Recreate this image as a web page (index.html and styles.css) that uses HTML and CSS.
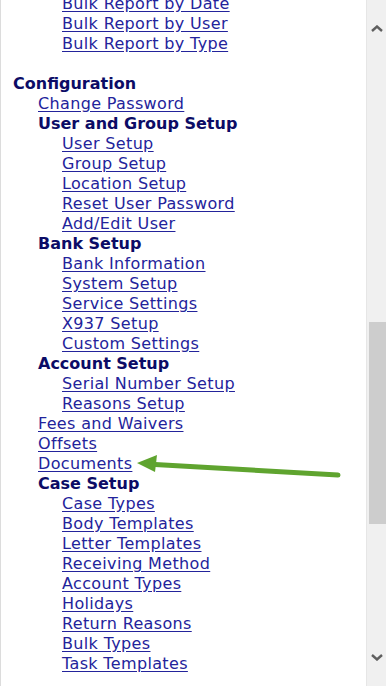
FILE: index.html
```html
<!DOCTYPE html>
<html lang="en">
  <head>
    <meta charset="UTF-8" />
    <meta name="viewport" content="width=device-width, initial-scale=1.0" />
    <title>Configuration Menu</title>
    <link rel="stylesheet" href="styles.css">
  </head>

  <body>
    <div class="frame">
      <div class="menu">
        <ul class="menu-list">
          <li class="lvl2"><a href="#">Bulk Report by Date</a></li>
          <li class="lvl2"><a href="#">Bulk Report by User</a></li>
          <li class="lvl2"><a href="#">Bulk Report by Type</a></li>
          <li class="spacer"></li>
          <li class="lvl0 head">Configuration</li>
          <li class="lvl1"><a href="#">Change Password</a></li>
          <li class="lvl1 head">User and Group Setup</li>
          <li class="lvl2"><a href="#">User Setup</a></li>
          <li class="lvl2"><a href="#">Group Setup</a></li>
          <li class="lvl2"><a href="#">Location Setup</a></li>
          <li class="lvl2"><a href="#">Reset User Password</a></li>
          <li class="lvl2"><a href="#">Add/Edit User</a></li>
          <li class="lvl1 head">Bank Setup</li>
          <li class="lvl2"><a href="#">Bank Information</a></li>
          <li class="lvl2"><a href="#">System Setup</a></li>
          <li class="lvl2"><a href="#">Service Settings</a></li>
          <li class="lvl2"><a href="#">X937 Setup</a></li>
          <li class="lvl2"><a href="#">Custom Settings</a></li>
          <li class="lvl1 head">Account Setup</li>
          <li class="lvl2"><a href="#">Serial Number Setup</a></li>
          <li class="lvl2"><a href="#">Reasons Setup</a></li>
          <li class="lvl1"><a href="#">Fees and Waivers</a></li>
          <li class="lvl1"><a href="#">Offsets</a></li>
          <li class="lvl1 marked">
            <a href="#">Documents</a>
            <!-- green annotation arrow -->
            <svg class="arrow" width="210" height="24" viewBox="0 0 210 24">
              <path d="M18 7.5 L201 18" stroke="#5fa42f" stroke-width="5" stroke-linecap="round" fill="none" />
              <path d="M0 6 L20 -2 L18 15 Z" fill="#5fa42f" />
            </svg>
          </li>
          <li class="lvl1 head">Case Setup</li>
          <li class="lvl2"><a href="#">Case Types</a></li>
          <li class="lvl2"><a href="#">Body Templates</a></li>
          <li class="lvl2"><a href="#">Letter Templates</a></li>
          <li class="lvl2"><a href="#">Receiving Method</a></li>
          <li class="lvl2"><a href="#">Account Types</a></li>
          <li class="lvl2"><a href="#">Holidays</a></li>
          <li class="lvl2"><a href="#">Return Reasons</a></li>
          <li class="lvl2"><a href="#">Bulk Types</a></li>
          <li class="lvl2"><a href="#">Task Templates</a></li>
        </ul>
      </div>

      <div class="scrollbar">
        <div class="scroll-btn up">
          <svg width="12" height="7" viewBox="0 0 12 7"><path d="M1 6 L6 1.5 L11 6" stroke="#5f5f5f" stroke-width="2.4" fill="none" /></svg>
        </div>
        <div class="track">
          <div class="thumb"></div>
        </div>
        <div class="scroll-btn down">
          <svg width="12" height="7" viewBox="0 0 12 7"><path d="M1 1 L6 5.5 L11 1" stroke="#5f5f5f" stroke-width="2.4" fill="none" /></svg>
        </div>
      </div>
    </div>
  </body>
</html>
```

FILE: styles.css
```css
html,
body {
  margin: 0;
  height: 100%;
  background-color: #ffffff;
}

.frame {
  display: flex;
  height: 686px;
  border-left: 1px solid #dcdcdc;
  overflow: hidden;
}

.menu {
  flex: 1;
  overflow: hidden;
}

.menu-list {
  list-style: none;
  margin: -6px 0 0 0;
  padding: 0;
  font-family: "DejaVu Sans", Verdana, sans-serif;
  font-size: 16px;
  line-height: 20px;
}

.menu-list li {
  height: 20px;
  white-space: nowrap;
}

.menu-list a {
  color: #23239b;
  letter-spacing: 0.35px;
  text-decoration: underline;
  text-underline-offset: 2px;
}

.head {
  color: #0c0c66;
  font-weight: bold;
}

.lvl0 {
  padding-left: 12px;
}

.lvl1 {
  padding-left: 37px;
}

.lvl2 {
  padding-left: 61px;
}

.marked {
  position: relative;
}

.arrow {
  position: absolute;
  left: 136px;
  top: 3px;
  overflow: visible;
}

.scrollbar {
  width: 19px;
  display: flex;
  flex-direction: column;
  background-color: #f0f0f0;
  border-left: 1px solid #e6e6e6;
}

.scroll-btn {
  height: 17px;
  display: flex;
  align-items: center;
  justify-content: center;
}

.scroll-btn.up {
  padding: 20px 0 2px 0;
}

.scroll-btn.down {
  padding: 2px 0 20px 0;
}

.track {
  flex: 1;
  display: flex;
  flex-direction: column;
  padding-top: 283px;
}

.thumb {
  height: 202px;
  margin-left: 2px;
  background-color: #cdcdcd;
}
```
